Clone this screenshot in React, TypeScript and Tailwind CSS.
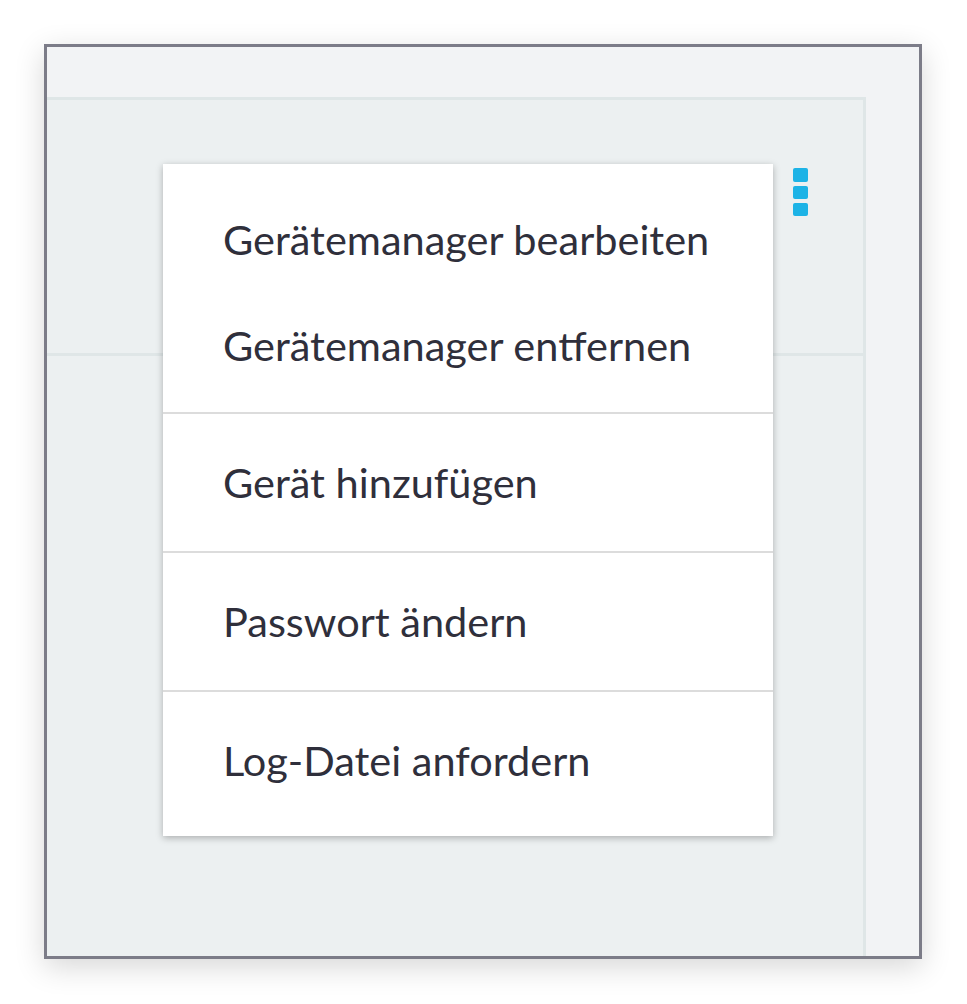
import React from 'react';

type MenuGroup = {
    items: string[];
    className: string;
};

const groups: MenuGroup[] = [
    { items: ['Gerätemanager bearbeiten', 'Gerätemanager entfernen'], className: 'pt-[50px] pb-[42px] gap-[56px]' },
    { items: ['Gerät hinzufügen'], className: 'pt-[43px] pb-[44px]' },
    { items: ['Passwort ändern'], className: 'pt-[43px] pb-[44px]' },
    { items: ['Log-Datei anfordern'], className: 'pt-[43px] pb-[51px]' },
];

const KebabButton: React.FC = () => (
    <button type="button" className="flex flex-col gap-[4px] w-[15px]" aria-label="Menü">
        <span className="block w-[15px] h-[14px] rounded-[2px] bg-[#1db3e6]" />
        <span className="block w-[15px] h-[13px] rounded-[2px] bg-[#1db3e6]" />
        <span className="block w-[15px] h-[13px] rounded-[2px] bg-[#1db3e6]" />
    </button>
);

const App: React.FC = () => {
    return (
        <div className="min-h-[1004px] bg-white pt-[44px] pl-[44px]" style={{ fontFamily: 'Lato, "Open Sans", sans-serif' }}>
            <div className="w-[878px] h-[915px] border-[3px] border-[#7c7c88] bg-[#f2f3f5] flex flex-col shadow-[0_8px_28px_rgba(0,0,0,0.16)]">
                {/* oberer Streifen */}
                <div className="h-[50px] shrink-0" />

                <div className="flex flex-1">
                    {/* Inhaltsbereich */}
                    <div className="relative flex-1 bg-[#ecf0f1] border-t-[3px] border-r-[3px] border-[#dfe6e7]">
                        <div className="h-[256px] border-b-[3px] border-[#dfe6e7] pt-[68px] pr-[55px] flex justify-end items-start">
                            <KebabButton />
                        </div>

                        {/* Dropdown-Menü */}
                        <div className="absolute left-[116px] top-[64px] w-[610px] bg-white shadow-[0_2px_7px_rgba(0,0,0,0.28)]">
                            {groups.map((group, i) => (
                                <div
                                    key={i}
                                    className={`flex flex-col pl-[60px] ${group.className} ${i > 0 ? 'border-t-2 border-[#dcdcdc]' : ''}`}
                                >
                                    {group.items.map(item => (
                                        <div key={item} className="text-[41.5px] leading-[50px] text-[#2f2f3b]">
                                            {item}
                                        </div>
                                    ))}
                                </div>
                            ))}
                        </div>
                    </div>

                    {/* rechter Streifen */}
                    <div className="w-[53px] shrink-0" />
                </div>
            </div>
        </div>
    );
};

export default App;
